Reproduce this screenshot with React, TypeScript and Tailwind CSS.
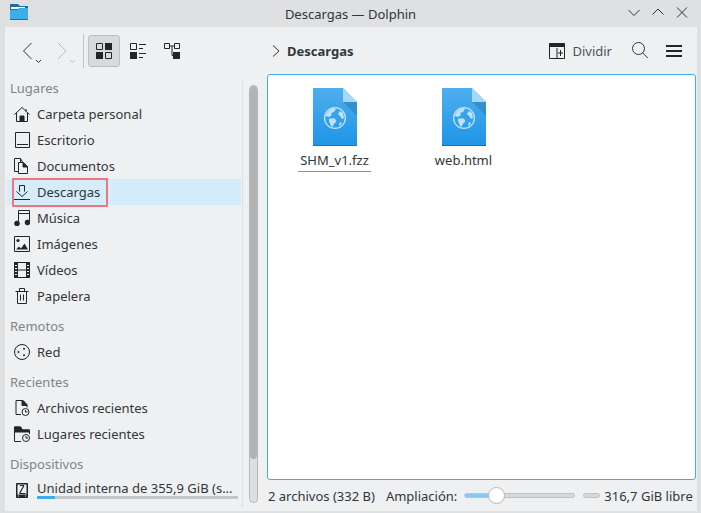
import React from "react";

const ic = "text-[#232629] shrink-0";
const S = { fill: "none", stroke: "currentColor", strokeWidth: 1 } as const;

function Svg({ children, w = 16, h = 16, cls = ic }: { children: React.ReactNode; w?: number; h?: number; cls?: string }) {
  return (
    <svg width={w} height={h} viewBox={`0 0 ${w} ${h}`} className={`${cls} block`} {...S}>
      {children}
    </svg>
  );
}

const Home = () => (
  <Svg>
    <path d="M.5 8.5 8 1.5l7.5 7M2.5 7v8.5h11V7M12 3v2.5" />
    <path d="M6 15V10h4v5z" fill="currentColor" />
  </Svg>
);
const Desktop = () => (
  <Svg>
    <path d="M1.5 .5h14v15h-14z" />
    <path d="M3 12.5h11" />
  </Svg>
);
const Docs = () => (
  <Svg>
    <path d="M.5 .5h6l2 3.5M.5 .5v13h4M6.5 .5v3.5" />
    <path d="M4.5 4.5h5l4 4v7h-9z" />
    <path d="M9 4.5 13.5 9H9z" fill="currentColor" />
  </Svg>
);
const Download = () => (
  <Svg>
    <path d="M5.5 1.5h5V7.5M5.5 1.5V7.5M2.5 7.5 8 12.5l5.5-5" />
    <path d="M0 15.5h16" />
  </Svg>
);
const Music = () => (
  <Svg>
    <path d="M4.5 13V.5h11V12M4.5 3.5h11" />
    <circle cx="3" cy="13.5" r="2.4" fill="currentColor" />
    <circle cx="13.5" cy="12.5" r="2.4" fill="currentColor" />
  </Svg>
);
const Pictures = () => (
  <Svg>
    <path d="M.5 .5h15v15H.5z" />
    <circle cx="4" cy="4.5" r="1.6" fill="currentColor" stroke="none" />
    <path d="M2 13.5l3-3 2 2 3.5-5 3.5 6z" fill="currentColor" stroke="none" />
  </Svg>
);
const Videos = () => (
  <Svg>
    <path d="M.5 .5h15v15H.5z" />
    <path d="M.5 .5h3v15h-3zM12.5 .5h3v15h-3z" fill="currentColor" />
    <path d="M3.5 8h9" />
    <path d="M1 3.5h2M1 6.5h2M1 9.5h2M1 12.5h2M13 3.5h2M13 6.5h2M13 9.5h2M13 12.5h2" stroke="#eff0f1" />
  </Svg>
);
const Trash = () => (
  <Svg>
    <path d="M1.5 3.5h13M5.5 3V.5h5V3M3.5 4v11.5h9V4M6.5 6.5v6M9.5 6.5v6" />
  </Svg>
);
const Network = () => (
  <Svg>
    <circle cx="8" cy="8" r="7.5" />
    <circle cx="4.5" cy="8" r="1" fill="currentColor" stroke="none" />
    <circle cx="10" cy="4.7" r="1" fill="currentColor" stroke="none" />
    <circle cx="10" cy="11.3" r="1" fill="currentColor" stroke="none" />
  </Svg>
);
const RecentFiles = () => (
  <Svg>
    <path d="M7 14.5H2V.5h7l4 4v3" />
    <path d="M9 .5h-1v5h5z" fill="currentColor" />
    <circle cx="11.5" cy="12" r="3.5" />
    <path d="M11.5 10v2h2" />
  </Svg>
);
const RecentPlaces = () => (
  <Svg>
    <path d="M.5 1h6l2 3h7v4M.5 5h15M.5 1v14.5H7" />
    <path d="M.5 1h6l2 3h7v2H.5z" fill="currentColor" />
    <circle cx="12" cy="12" r="3.5" />
    <path d="M12 10v2h2" />
  </Svg>
);
const Drive = () => (
  <Svg>
    <path d="M2.5 .5h11v14h-11z" fill="currentColor" />
    <path d="M3.5 1.5h9v10h-9z" fill="#eff0f1" stroke="none" />
    <path d="M10 2.5 5.5 10.5M6 2.5h4M5.5 10.5h6" strokeWidth="1.2" />
    <path d="M4 13h1M11 13h1" stroke="#eff0f1" />
  </Svg>
);

function Place({ icon, label, active }: { icon: React.ReactNode; label: string; active?: boolean }) {
  return (
    <div className="relative h-[26px] flex items-center pl-[9px]">
      {active && <div className="absolute left-[2px] right-[2px] top-0 bottom-0 bg-[#d5ecfa]" />}
      {active && <div className="absolute left-[7px] -top-[1px] w-[96px] h-[29px] border-2 border-[#f0757d] rounded-[1px]" />}
      <span className="relative w-[23px] flex justify-start shrink-0">{icon}</span>
      <span className="relative text-[13px] leading-[18px] text-[#31363b] whitespace-nowrap">{label}</span>
    </div>
  );
}

function Section({ title, first }: { title: string; first?: boolean }) {
  return (
    <div className={`${first ? "h-[27px] pt-[5px]" : "h-[30px] pt-[8px]"} text-[13px] leading-[18px] text-[#7f8489]`}>
      {title}
    </div>
  );
}

function FileIcon() {
  return (
    <svg width="44" height="58" viewBox="0 0 44 58" className="block">
      <defs>
        <linearGradient id="fileBlue" x1="0" y1="0" x2="0" y2="1">
          <stop offset="0" stopColor="#4eaeee" />
          <stop offset="1" stopColor="#1e95e6" />
        </linearGradient>
      </defs>
      <path d="M0 0h30l14 14v44H0z" fill="url(#fileBlue)" />
      <path d="M0 57h44v1H0z" fill="#1277b8" />
      <path d="M30 14 44 28V14z" fill="#2f7eb6" opacity=".55" />
      <path d="M30 0 44 14H30z" fill="#a8d8f8" />
      <circle cx="22" cy="30" r="10.4" fill="none" stroke="#bfe2fa" strokeWidth="1.3" />
      <path
        d="M13 27c1-3 4-6 8-7l2 1-2 3-3 1 1 2-3 2-3-1zM16 31c3-1 6-1 7 1s-2 3-3 6l-1 1c-2-2-2-4-3-6zM27 23l3 2 1 5-2 1-2-3-2-2zM27 34l2 1-2 3-1-1z"
        fill="#bfe2fa"
      />
    </svg>
  );
}

function File({ name, underline }: { name: string; underline?: boolean }) {
  return (
    <div className="w-[129px] flex flex-col items-center">
      <div className="mt-[13px]">
        <FileIcon />
      </div>
      <div className="mt-[5px] text-[13px] leading-[18px] text-[#31363b] whitespace-nowrap">{name}</div>
      {underline && <div className="mt-[2px] w-[73px] h-px bg-[#3daee9]" />}
    </div>
  );
}

export default function App() {
  return (
    <div
      className="w-[701px] h-[513px] overflow-hidden flex flex-col bg-[#dee0e2] text-[#31363b]"
      style={{ fontFamily: '"Noto Sans", sans-serif' }}
    >
      {/* title bar */}
      <div className="h-[27px] shrink-0 relative flex items-center justify-center">
        <svg width="19" height="18" viewBox="0 0 19 18" className="absolute left-[9px] top-[3px] block">
          <path d="M1 1h8l2 2h8v14H1z" fill="#1d6fa8" />
          <path d="M2 4h14v2H2z" fill="#fff" />
          <path d="M1 7h7l2-2h9v12H1z" fill="#3daee9" />
          <path d="M1 16h18v1H1z" fill="#1d6fa8" />
        </svg>
        <span className="text-[13px] leading-[18px] text-[#31363b]">Descargas — Dolphin</span>
        <div className="absolute right-[12px] top-[5px] flex gap-[10px] text-[#31363b]">
          <Svg w={14} h={14} cls="text-[#31363b]">
            <path d="M1.5 5 7 10.5 12.5 5" />
          </Svg>
          <Svg w={14} h={14} cls="text-[#31363b]">
            <path d="M1.5 9.5 7 4l5.5 5.5" />
          </Svg>
          <Svg w={14} h={14} cls="text-[#31363b]">
            <path d="M2 2.5l10 10M12 2.5l-10 10" />
          </Svg>
        </div>
      </div>

      <div className="flex-1 min-h-0 ml-[5px] mr-[4px] mb-[2px] bg-[#eff0f1] flex flex-col">
        {/* toolbar */}
        <div className="h-[47px] shrink-0 flex items-center pl-[15px] pr-[15px]">
          <svg width="20" height="22" viewBox="0 0 20 22" className="text-[#31363b] block shrink-0 overflow-visible" {...S}>
            <path d="M11.5 3 3.5 11l8 8" />
            <path d="M16 20l2.5 2.5L21 20" />
          </svg>
          <svg width="20" height="22" viewBox="0 0 20 22" className="text-[#b9bbbd] block shrink-0 ml-[14px] overflow-visible" {...S}>
            <path d="M4 3l8 8-8 8" />
            <path d="M16 20l2.5 2.5L21 20" />
          </svg>
          <div className="ml-[9px] w-px h-[34px] bg-[#c1c3c5]" />
          <div className="ml-[4px] w-[32px] h-[32px] rounded-[3px] bg-[#d7d9db] border border-[#bcbec0] flex items-center justify-center">
            <svg width="16" height="16" viewBox="0 0 16 16" className="text-[#232629] block" {...S}>
              <path d="M.5.5h6v6h-6zM9.5 9.5h6v6h-6z" />
              <path d="M9 0h7v7H9zM0 9h7v7H0z" fill="currentColor" stroke="none" />
            </svg>
          </div>
          <div className="w-[34px] ml-[1px] flex justify-center">
            <svg width="16" height="16" viewBox="0 0 16 16" className="text-[#232629] block" {...S}>
              <path d="M.5.5h6v6h-6z" />
              <path d="M0 9h7v7H0z" fill="currentColor" stroke="none" />
              <path d="M9 1.5h7M9 5.5h4M9 10.5h7M9 14.5h4" />
            </svg>
          </div>
          <div className="w-[34px] flex justify-center">
            <svg width="16" height="16" viewBox="0 0 16 16" className="text-[#232629] block" {...S}>
              <path d="M.5.5h5v5h-5zM10.5.5h5v5h-5zM5.5 3h5M8 3v9.5h1" />
              <path d="M9 9h7v7H9z" fill="currentColor" stroke="none" />
            </svg>
          </div>
          <svg width="10" height="14" viewBox="0 0 10 14" className="text-[#31363b] block shrink-0 ml-[82px]" {...S}>
            <path d="M2 1.5 8 7l-6 5.5" />
          </svg>
          <span className="ml-[6px] text-[13px] leading-[18px] font-bold text-[#31363b]">Descargas</span>
          <div className="flex-1" />
          <Svg>
            <path d="M.5 1.5h15v14H.5zM8 5v10.5M11.5 7v6M9 10h5" />
            <path d="M.5 .5h15v3H.5z" fill="currentColor" />
          </Svg>
          <span className="ml-[7px] text-[13px] leading-[18px] text-[#4d5257]">Dividir</span>
          <svg width="16" height="18" viewBox="0 0 16 18" className="text-[#31363b] block shrink-0 ml-[20px]" {...S}>
            <circle cx="6.5" cy="6.5" r="6" />
            <path d="M10.8 11l5 5" />
          </svg>
          <svg width="16" height="12" viewBox="0 0 16 12" className="text-[#232629] block shrink-0 ml-[18px]" fill="currentColor">
            <path d="M0 0h16v2H0zM0 5h16v2H0zM0 10h16v2H0z" />
          </svg>
        </div>

        {/* body */}
        <div className="flex-1 min-h-0 flex">
          {/* sidebar */}
          <div className="w-[238px] shrink-0 flex flex-col">
            <div className="pl-[5px]">
              <Section title="Lugares" first />
            </div>
            <Place icon={<Home />} label="Carpeta personal" />
            <Place icon={<Desktop />} label="Escritorio" />
            <Place icon={<Docs />} label="Documentos" />
            <Place icon={<Download />} label="Descargas" active />
            <Place icon={<Music />} label="Música" />
            <Place icon={<Pictures />} label="Imágenes" />
            <Place icon={<Videos />} label="Vídeos" />
            <Place icon={<Trash />} label="Papelera" />
            <div className="pl-[5px]">
              <Section title="Remotos" />
            </div>
            <Place icon={<Network />} label="Red" />
            <div className="pl-[5px]">
              <Section title="Recientes" />
            </div>
            <Place icon={<RecentFiles />} label="Archivos recientes" />
            <Place icon={<RecentPlaces />} label="Lugares recientes" />
            <div className="pl-[5px]">
              <Section title="Dispositivos" />
            </div>
            <div className="h-[26px] flex items-start pl-[9px] pt-[2px]">
              <span className="w-[23px] shrink-0 mt-[4px]">
                <Drive />
              </span>
              <div className="w-[201px]">
                <div className="text-[13px] leading-[18px] text-[#31363b] whitespace-nowrap">Unidad interna de 355,9 GiB (s...</div>
                <div className="h-[3px] bg-[#c4c6c8] -mt-[1px]">
                  <div className="h-full w-[18px] bg-[#3daee9]" />
                </div>
              </div>
            </div>
          </div>

          {/* separator and scrollbar */}
          <div className="w-[24px] shrink-0 flex">
            <div className="w-px mt-[5px] mb-[3px] bg-[#dfe1e3] -ml-[1px]" />
            <div className="ml-[6px] w-[9px] mt-[11px] h-[418px] rounded-full border border-[#b5b7b9] bg-[#dcdee0] overflow-hidden">
              <div className="h-[373px] bg-[#b1b3b5] rounded-full" />
            </div>
          </div>

          {/* main column */}
          <div className="flex-1 min-w-0 flex flex-col pr-[1px]">
            <div className="h-[406px] shrink-0 bg-white border border-[#3daee9] rounded-[3px] flex pl-[2px]">
              <File name="SHM_v1.fzz" underline />
              <File name="web.html" />
            </div>
            <div className="h-[31px] flex items-center pl-[1px] text-[13px] leading-[18px] text-[#31363b] whitespace-nowrap">
              <span>2 archivos (332 B)</span>
              <span className="ml-[11px]">Ampliación:</span>
              <div className="relative ml-[7px] w-[111px] h-[5px] rounded-full bg-[#d5d7d9] border border-[#c0c2c4]">
                <div className="absolute left-0 top-0 bottom-0 w-[26px] rounded-l-full bg-[#82cdf3]" />
                <div className="absolute left-[23px] -top-[7px] w-[17px] h-[17px] rounded-full bg-white border border-[#b5b7b9]" />
              </div>
              <div className="ml-[8px] w-[17px] h-[5px] rounded-full bg-[#d5d7d9] border border-[#c0c2c4]" />
              <span className="ml-[4px]">316,7 GiB libre</span>
            </div>
          </div>
        </div>
      </div>
    </div>
  );
}
